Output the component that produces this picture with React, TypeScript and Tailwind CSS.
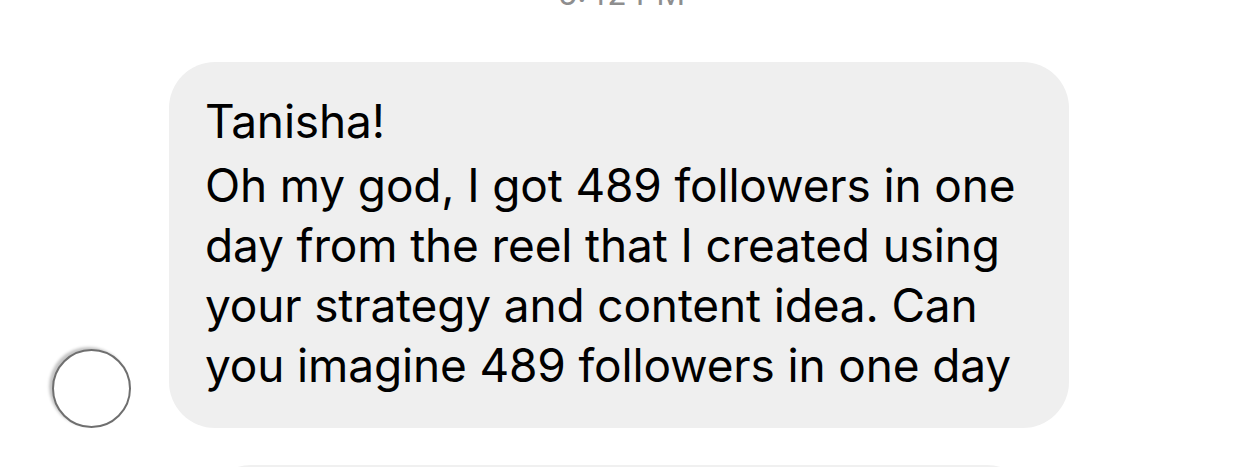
import React from 'react';

const lines = [
  'Oh my god, I got 489 followers in one',
  'day from the reel that I created using',
  'your strategy and content idea. Can',
  'you imagine 489 followers in one day',
];

export default function App() {
  return (
    <div className="w-[1242px] h-[467px] overflow-hidden bg-white font-['Inter',sans-serif] antialiased">
      {/* Timestamp (cut off at top) */}
      <div className="-mt-[21px] h-[30px] flex justify-center text-[32px] leading-[30px] text-[#8e8e8e] pl-[1px]">
        5:42 PM
      </div>

      {/* Message row */}
      <div className="mt-[53px] flex items-end pl-[52px] gap-[38px]">
        <div className="w-[79px] h-[79px] shrink-0 rounded-full bg-white border-2 border-[#6f6f6f] shadow-[-3px_-2px_3px_#c4c4c4]" />
        <div className="w-[900px] rounded-[46px] bg-[#efefef] pl-[36px] pr-[30px] pt-[29px] pb-[33px] text-[46px] leading-[60px] tracking-[-0.15px] text-black">
          <div className="mb-[4px]">Tanisha!</div>
          {lines.map((l) => (
            <div key={l} className="whitespace-nowrap">{l}</div>
          ))}
        </div>
      </div>

      {/* Next bubble, partially visible */}
      <div className="mt-[37px] ml-[205px] w-[828px] h-[120px] rounded-[46px] bg-[#f0f0f0]" />
    </div>
  );
}
